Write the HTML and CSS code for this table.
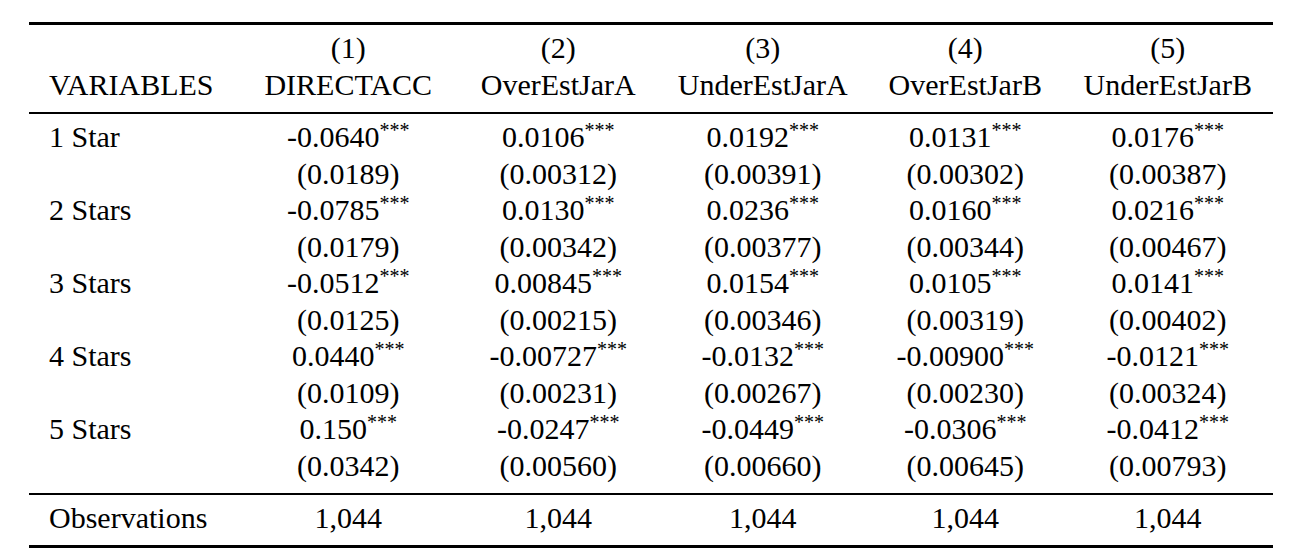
FILE: index.html
```html
<!DOCTYPE html>
<html>
<head>
<meta charset="utf-8">
<link rel="stylesheet" href="styles.css">
</head>
<body>
<div class="table">
  <div class="rule thick"></div>
  <div class="sec head">
    <div class="c l"></div><div class="c">(1)</div><div class="c">(2)</div><div class="c">(3)</div><div class="c">(4)</div><div class="c">(5)</div>
    <div class="c l">VARIABLES</div><div class="c">DIRECTACC</div><div class="c">OverEstJarA</div><div class="c">UnderEstJarA</div><div class="c">OverEstJarB</div><div class="c">UnderEstJarB</div>
  </div>
  <div class="rule thin"></div>
  <div class="sec body">
    <div class="c l">1 Star</div><div class="c">-0.0640<span class="st">***</span></div><div class="c">0.0106<span class="st">***</span></div><div class="c">0.0192<span class="st">***</span></div><div class="c">0.0131<span class="st">***</span></div><div class="c">0.0176<span class="st">***</span></div>
    <div class="c l"></div><div class="c">(0.0189)</div><div class="c">(0.00312)</div><div class="c">(0.00391)</div><div class="c">(0.00302)</div><div class="c">(0.00387)</div>
    <div class="c l">2 Stars</div><div class="c">-0.0785<span class="st">***</span></div><div class="c">0.0130<span class="st">***</span></div><div class="c">0.0236<span class="st">***</span></div><div class="c">0.0160<span class="st">***</span></div><div class="c">0.0216<span class="st">***</span></div>
    <div class="c l"></div><div class="c">(0.0179)</div><div class="c">(0.00342)</div><div class="c">(0.00377)</div><div class="c">(0.00344)</div><div class="c">(0.00467)</div>
    <div class="c l">3 Stars</div><div class="c">-0.0512<span class="st">***</span></div><div class="c">0.00845<span class="st">***</span></div><div class="c">0.0154<span class="st">***</span></div><div class="c">0.0105<span class="st">***</span></div><div class="c">0.0141<span class="st">***</span></div>
    <div class="c l"></div><div class="c">(0.0125)</div><div class="c">(0.00215)</div><div class="c">(0.00346)</div><div class="c">(0.00319)</div><div class="c">(0.00402)</div>
    <div class="c l">4 Stars</div><div class="c">0.0440<span class="st">***</span></div><div class="c">-0.00727<span class="st">***</span></div><div class="c">-0.0132<span class="st">***</span></div><div class="c">-0.00900<span class="st">***</span></div><div class="c">-0.0121<span class="st">***</span></div>
    <div class="c l"></div><div class="c">(0.0109)</div><div class="c">(0.00231)</div><div class="c">(0.00267)</div><div class="c">(0.00230)</div><div class="c">(0.00324)</div>
    <div class="c l">5 Stars</div><div class="c">0.150<span class="st">***</span></div><div class="c">-0.0247<span class="st">***</span></div><div class="c">-0.0449<span class="st">***</span></div><div class="c">-0.0306<span class="st">***</span></div><div class="c">-0.0412<span class="st">***</span></div>
    <div class="c l"></div><div class="c">(0.0342)</div><div class="c">(0.00560)</div><div class="c">(0.00660)</div><div class="c">(0.00645)</div><div class="c">(0.00793)</div>
  </div>
  <div class="rule thin"></div>
  <div class="sec foot">
    <div class="c l">Observations</div><div class="c">1,044</div><div class="c">1,044</div><div class="c">1,044</div><div class="c">1,044</div><div class="c">1,044</div>
  </div>
  <div class="rule thick"></div>
</div>
</body>
</html>
```

FILE: styles.css
```css
html, body {
  margin: 0;
  padding: 0;
  background: #ffffff;
}
body {
  font-family: "Liberation Serif", "Times New Roman", serif;
  font-size: 30px;
  color: #000000;
}
.table {
  width: 1244px;
  margin: 22px 0 0 29px;
}
.rule {
  background: #000000;
  width: 100%;
}
.rule.thick { height: 3px; }
.rule.thin { height: 2px; }
.sec {
  display: grid;
  grid-template-columns: 208.5px 221.5px 198.5px 210.5px 194.5px 210.5px;
  padding: 5.3px 0 8.7px;
}
.c {
  line-height: 36.5px;
  height: 36.5px;
  text-align: center;
  white-space: nowrap;
}
.c.l {
  text-align: left;
  padding-left: 20px;
}
.st {
  font-size: 20px;
  vertical-align: 10px;
  line-height: 0;
}
```
